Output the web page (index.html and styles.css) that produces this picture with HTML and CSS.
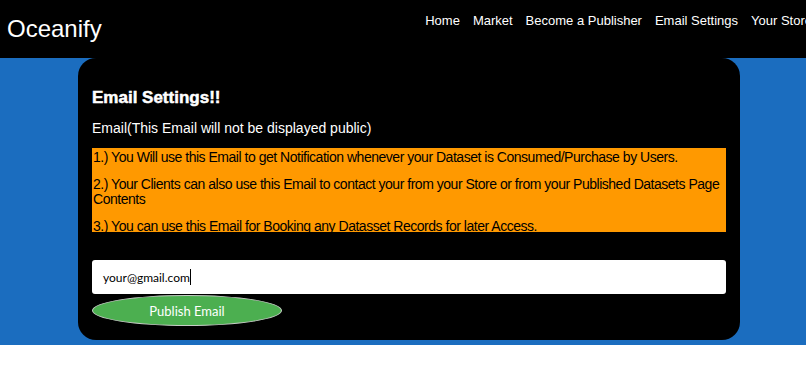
FILE: index.html
```html
<!DOCTYPE html>
<html>
<head>
<meta charset="utf-8">
<link rel="stylesheet" href="styles.css">
</head>
<body>
<header class="topbar">
  <div class="brand">Oceanify</div>
  <nav class="nav">
    <a href="#">Home</a>
    <a href="#">Market</a>
    <a href="#">Become a Publisher</a>
    <a href="#">Email Settings</a>
    <a href="#">Your Store</a>
  </nav>
</header>
<main class="stage">
  <section class="card">
    <h2 class="title">Email Settings!!</h2>
    <p class="label">Email(This Email will not be displayed public)</p>
    <div class="notes">
      <p>1.) You Will use this Email to get Notification whenever your Dataset is Consumed/Purchase by Users.</p>
      <p>2.) Your Clients can also use this Email to contact your from your Store or from your Published Datasets Page Contents</p>
      <p>3.) You can use this Email for Booking any Datasset Records for later Access.</p>
    </div>
    <div class="field"><span class="val">your@gmail.com</span><span class="caret"></span></div>
    <button class="publish">Publish Email</button>
  </section>
</main>
</body>
</html>
```
FILE: styles.css
```css
html, body {
  margin: 0;
  padding: 0;
  background: #fff;
  overflow: hidden;
}
body {
  font-family: "Liberation Sans", Arial, sans-serif;
  width: 806px;
  height: 372px;
}
.topbar {
  height: 58px;
  background: #000;
  display: flex;
  justify-content: space-between;
  align-items: flex-start;
  overflow: hidden;
  white-space: nowrap;
}
.brand {
  color: #fff;
  font-size: 24px;
  padding: 15px 0 0 7px;
  line-height: 28px;
}
.nav {
  display: flex;
  gap: 13px;
  padding-top: 13px;
  margin-right: -6px;
}
.nav a {
  color: #fff;
  text-decoration: none;
  font-size: 13px;
  line-height: 15px;
}
.stage {
  background: #1b6dbf;
  padding: 0 66px 5px 78px;
  height: 282px;
  box-sizing: content-box;
}
.card {
  background: #000;
  width: 662px;
  height: 282px;
  box-sizing: border-box;
  border-radius: 18px;
  padding: 30px 14px 0 14px;
}
.title {
  margin: 0;
  color: #fff;
  font-size: 17px;
  font-weight: bold;
  line-height: 20px;
  -webkit-text-stroke: 0.5px #fff;
}
.label {
  margin: 12px 0 0;
  color: #fff;
  font-size: 14px;
  line-height: 16px;
}
.notes {
  margin-top: 12px;
  background: #ff9900;
  padding: 2px 0 1px 1px;
  height: 84px;
  box-sizing: border-box;
  font-size: 14px;
  letter-spacing: -0.48px;
  color: #000;
}
.notes p {
  margin: 0 0 12px;
  line-height: 15px;
}
.notes p:last-child { margin-bottom: 0; }
.field {
  margin-top: 28px;
  background: #fff;
  height: 34px;
  border-radius: 3px;
  display: flex;
  align-items: center;
  padding-left: 11px;
  font-family: Lato, "Open Sans", sans-serif;
  font-size: 12px;
  color: #000;
}
.caret {
  display: inline-block;
  width: 1px;
  height: 16px;
  background: #000;
}
.publish {
  display: block;
  margin-top: 1px;
  width: 190px;
  height: 31px;
  background: #4caf50;
  border: 1px solid #c4ccc4;
  border-radius: 50%;
  color: #fff;
  font-family: Lato, "Open Sans", sans-serif;
  font-size: 13px;
  padding: 0;
}
```
